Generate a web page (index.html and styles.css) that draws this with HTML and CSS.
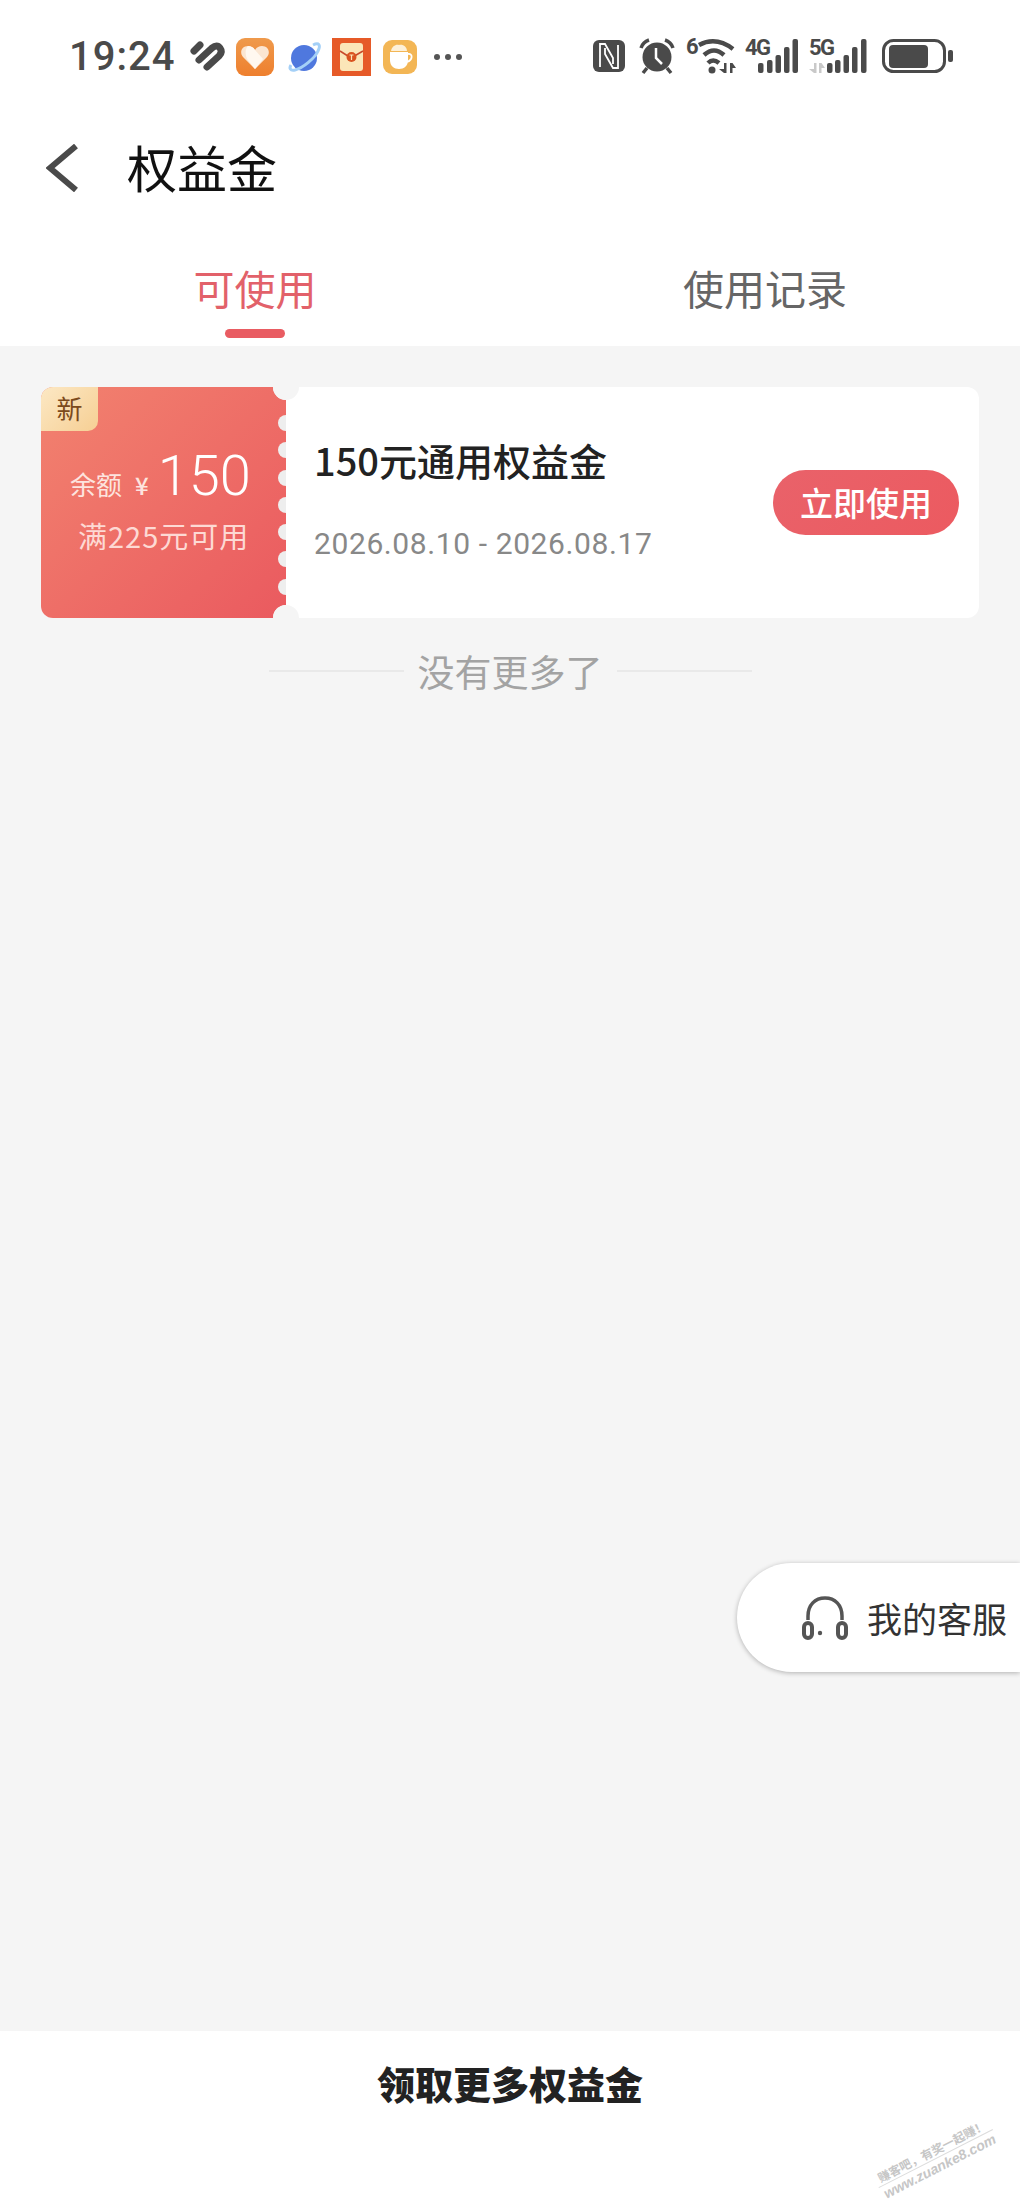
FILE: index.html
```html
<!DOCTYPE html>
<html lang="zh-CN">
<head>
  <meta charset="UTF-8">
  <title>权益金</title>
  <link rel="stylesheet" href="styles.css">
</head>
<body>
  <div class="page">
    <header class="top">
      <div class="status">
        <div class="status-left">
          <span class="time">19:24</span>
          <svg class="ico" width="45" height="40" viewBox="0 0 45 40">
            <g transform="translate(0 5)" fill="none" stroke="#4a4a4a" stroke-width="7" stroke-linecap="round" stroke-linejoin="round">
              <path d="M3 9 L9 3"/>
              <path d="M8 18 L21 6 Q26 2 29 6 Q32 10 28 14 L16 25"/>
            </g>
          </svg>
          <svg class="ico" width="53" height="40" viewBox="0 0 53 40">
            <defs>
              <linearGradient id="gOrange" x1="0" y1="0" x2="0" y2="1"><stop offset="0" stop-color="#ef9a4c"/><stop offset="1" stop-color="#ee7f2e"/></linearGradient>
            </defs>
            <rect x="0" y="1" width="38" height="38" rx="9" fill="url(#gOrange)"/>
            <path d="M19 32 L7 20 C3 15 6 9 12 9 C15 9 17 10 19 13 C21 10 23 9 26 9 C32 9 35 15 31 20 Z" fill="#fbe6d2"/>
            <path d="M12 9 C15 9 17 10 19 13 L27 22 L19 32 L11 22 C9 17 9 12 12 9Z" fill="#fff8f0"/>
          </svg>
          <svg class="ico" width="43" height="40" viewBox="0 0 43 40">
            <circle cx="15" cy="21" r="13" fill="#4f78de"/>
            <path d="M24 8 C30 5 32 8 29 14 C26 21 14 31 6 33 C1 34 0 31 2 28" fill="none" stroke="#a4d0f7" stroke-width="3"/>
          </svg>
          <svg class="ico" width="51" height="40" viewBox="0 0 51 40">
            <rect x="0" y="1" width="39" height="38" fill="#e65a28"/>
            <rect x="8" y="6" width="23" height="28" rx="3" fill="#fbe6b8"/>
            <path d="M8 14 L19 21 L31 14" fill="none" stroke="#c8492a" stroke-width="1.5"/>
            <circle cx="19.500" cy="20" r="5" fill="#d9531f"/>
            <path d="M17.500 18 h4 M19.500 18 v5" stroke="#fbe6b8" stroke-width="1.200"/>
          </svg>
          <svg class="ico" width="51" height="40" viewBox="0 0 51 40">
            <rect x="0" y="3" width="34" height="34" rx="9" fill="#f3b655"/>
            <path d="M7 15 H25 V23 C25 29 21 32 16 32 C11 32 7 29 7 23 Z" fill="#fff"/>
            <path d="M8 14 C9 9 13 7 16 8 C20 7 24 10 24 14 Z" fill="#fdf0d8"/>
            <path d="M25 17 C30 16 30 23 24 25" fill="none" stroke="#fff" stroke-width="1.800"/>
          </svg>
          <span class="more-dots"><i></i><i></i><i></i></span>
        </div>
        <div class="status-right">
          <svg class="ico" width="46" height="40" viewBox="0 0 46 40">
            <rect x="0" y="3" width="32" height="32" rx="6" fill="#4a4a4a"/>
            <path d="M7 30 V7 H12 L20 21 V27 M25 8 V31 H20 L12 17 V11" fill="none" stroke="#fff" stroke-width="1.800"/>
          </svg>
          <svg class="ico" width="47" height="40" viewBox="0 0 47 40">
            <circle cx="18" cy="20" r="14.500" fill="#4a4a4a"/>
            <path d="M17 11 V21 L23 27" fill="none" stroke="#fff" stroke-width="2.500"/>
            <path d="M2 11 Q4 5 10 3 M34 11 Q32 5 26 3 M8 31 L4 36 M28 31 L32 36" fill="none" stroke="#4a4a4a" stroke-width="3.500"/>
          </svg>
          <svg class="ico" width="59" height="40" viewBox="0 0 59 40">
            <text x="0" y="17" class="net">6</text>
            <path d="M13 8 Q30 -1 47 12 M18 18 Q28 9 38 18 M22 26 Q27 21 33 26" fill="none" stroke="#4a4a4a" stroke-width="4.500"/>
            <circle cx="26" cy="33" r="3.500" fill="#4a4a4a"/>
            <path d="M38 26 h2.500 v10 h-2.500 Z M38 36 L33 32 H38 Z M44 26 h2.500 v10 h-2.500 Z M46.500 26 L50 31 H46.500 Z" fill="#4a4a4a"/>
          </svg>
          <svg class="ico" width="64" height="40" viewBox="0 0 64 40">
            <text x="0" y="18" class="net">4G</text>
            <g fill="#4a4a4a">
              <rect x="13" y="26" width="5.500" height="10" rx="2"/>
              <rect x="22" y="23" width="5.500" height="13" rx="2"/>
              <rect x="30.500" y="18" width="5.500" height="18" rx="2"/>
              <rect x="39" y="10" width="5.500" height="26" rx="2"/>
              <rect x="47.500" y="2" width="5.500" height="34" rx="2"/>
            </g>
          </svg>
          <svg class="ico" width="73" height="40" viewBox="0 0 73 40">
            <text x="0" y="18" class="net">5G</text>
            <path d="M5 26 h2.500 v10 h-2.500 Z M5 36 L0 32 H5 Z M10 26 h2.500 v10 h-2.500 Z M12.500 26 L16 31 H12.500 Z" fill="#c9c9c9"/>
            <g fill="#4a4a4a">
              <rect x="18" y="26" width="5.500" height="10" rx="2"/>
              <rect x="26" y="23" width="5.500" height="13" rx="2"/>
              <rect x="34.500" y="18" width="5.500" height="18" rx="2"/>
              <rect x="43" y="10" width="5.500" height="26" rx="2"/>
              <rect x="52" y="2" width="5.500" height="34" rx="2"/>
            </g>
          </svg>
          <svg class="ico" width="71" height="40" viewBox="0 0 71 40">
            <rect x="1.500" y="3.500" width="61" height="31" rx="10" fill="none" stroke="#4a4a4a" stroke-width="3"/>
            <rect x="7" y="8" width="39" height="23" rx="4" fill="#4a4a4a"/>
            <rect x="66" y="13" width="5" height="12" rx="2" fill="#4a4a4a"/>
          </svg>
        </div>
      </div>

      <nav class="nav">
        <svg class="back" width="32" height="48" viewBox="0 0 32 48">
          <path d="M30 2 L4 24 L30 46" fill="none" stroke="#4a4a4a" stroke-width="6"/>
        </svg>
        <h1 class="nav-title">权益金</h1>
      </nav>

      <div class="tabs">
        <div class="tab active">可使用</div>
        <div class="tab">使用记录</div>
      </div>
    </header>

    <main class="content">
      <div class="ticket">
        <div class="ticket-left">
          <span class="badge">新</span>
          <div class="amount">
            <span class="amount-label">余额</span>
            <span class="yen">¥</span>
            <span class="amount-num">150</span>
          </div>
          <div class="limit">满225元可用</div>
        </div>
        <div class="notches">
          <i></i><i></i><i></i><i></i><i></i><i></i><i></i>
        </div>
        <div class="ticket-right">
          <div class="info">
            <div class="ticket-name">150元通用权益金</div>
            <div class="ticket-date">2026.08.10 - 2026.08.17</div>
          </div>
          <div class="use-btn">立即使用</div>
        </div>
      </div>

      <div class="no-more">
        <span class="line"></span>
        <span class="no-more-text">没有更多了</span>
        <span class="line"></span>
      </div>

      <div class="service">
        <svg width="46" height="44" viewBox="0 0 46 44">
          <path d="M6 24 V20 C6 9 13 2 23 2 C33 2 40 9 40 20 V24" fill="none" stroke="#555" stroke-width="3.500"/>
          <rect x="2" y="27" width="8" height="15" rx="4" fill="none" stroke="#555" stroke-width="4"/>
          <rect x="36" y="27" width="8" height="15" rx="4" fill="none" stroke="#555" stroke-width="4"/>
          <circle cx="18" cy="37" r="2.200" fill="#555"/>
        </svg>
        <span class="service-text">我的客服</span>
      </div>
    </main>

    <footer class="bottom">
      <div class="bottom-text">领取更多权益金</div>
      <div class="watermark">
        <div class="wm-cn">赚客吧，有奖一起赚！</div>
        <div class="wm-en">www.zuanke8.com</div>
      </div>
    </footer>
  </div>
</body>
</html>
```

FILE: styles.css
```css
* { box-sizing: border-box; }
html, body { margin: 0; padding: 0; }
body { font-family: "Noto Sans CJK SC", "Noto Sans", sans-serif; background: #f5f5f5; color: #222; }
.page { width: 1020px; height: 2210px; display: flex; flex-direction: column; overflow: hidden; }

.top { background: #fff; }
.status {
  height: 114px;
  display: flex;
  align-items: center;
  justify-content: space-between;
  padding: 0 67px 0 69px;
}
.status-left, .status-right { display: flex; align-items: center; }
.ico { display: block; flex: none; overflow: visible; }
.time {
  font-family: Roboto, sans-serif;
  font-size: 40px;
  font-weight: 500;
  letter-spacing: 1px;
  color: #4a4a4a;
  margin-right: 16px;
  line-height: 40px;
}
.more-dots { display: flex; gap: 5px; }
.more-dots i { width: 6px; height: 6px; border-radius: 50%; background: #555; }
.net { font-family: Roboto, sans-serif; font-size: 22px; font-weight: 700; fill: #4a4a4a; letter-spacing: -1.5px; }

.nav { height: 104px; display: flex; align-items: center; padding-left: 46px; }
.back { display: block; margin: 4px 49px 0 0; }
.nav-title { margin: 0; font-size: 50px; font-weight: 400; color: #111; line-height: 1; }

.tabs { height: 128px; display: flex; }
.tab {
  position: relative;
  flex: 1;
  text-align: center;
  font-size: 41px;
  line-height: 138px;
  color: #666;
}
.tab.active { color: #e2616a; }
.tab.active::after {
  content: "";
  position: absolute;
  left: 50%;
  bottom: 8px;
  width: 60px;
  height: 9px;
  margin-left: -30px;
  border-radius: 5px;
  background: #e95c62;
}

.content { flex: 1; position: relative; padding: 41px 41px 0; }

.ticket { position: relative; height: 231px; display: flex; border-radius: 12px; overflow: hidden; }
.ticket-left {
  position: relative;
  width: 245px;
  flex: none;
  padding-top: 60px;
  background: linear-gradient(135deg, #f2826f 0%, #ea5a5f 100%);
  color: #fff;
}
.badge {
  position: absolute;
  left: 0;
  top: 0;
  width: 57px;
  height: 44px;
  border-bottom-right-radius: 10px;
  background: linear-gradient(135deg, #fce8c4, #f6cf94);
  color: #7c4a1c;
  font-size: 26px;
  line-height: 42px;
  text-align: center;
}
.amount { display: flex; align-items: baseline; padding-left: 29px; height: 58px; }
.amount-label { font-size: 26px; color: #fde4df; }
.yen { font-size: 24px; font-weight: 500; color: #fde4df; margin-left: 13px; }
.amount-num { font-family: Roboto, sans-serif; font-size: 56px; font-weight: 300; margin-left: 9px; line-height: 58px; }
.limit { margin-top: 14px; padding-left: 37px; font-size: 29px; letter-spacing: 1px; line-height: 32px; color: #fdd9d4; white-space: nowrap; }

.notches {
  position: absolute;
  left: 237px;
  top: 28px;
  display: flex;
  flex-direction: column;
  gap: 11.3px;
}
.notches i { display: block; width: 16px; height: 16px; border-radius: 50%; background: #eeeeee; }
.ticket-left::before, .ticket-left::after {
  content: "";
  position: absolute;
  left: 232px;
  width: 26px;
  height: 26px;
  border-radius: 50%;
  background: #f5f5f5;
}
.ticket-left::before { top: -13px; }
.ticket-left::after { bottom: -13px; }

.ticket-right {
  flex: 1;
  position: relative;
  background: #fff;
  display: flex;
  align-items: center;
  justify-content: space-between;
  padding: 0 20px 0 28px;
}
.ticket-right::before, .ticket-right::after {
  content: "";
  position: absolute;
  left: -13px;
  width: 26px;
  height: 26px;
  border-radius: 50%;
  background: #f5f5f5;
}
.ticket-right::before { top: -13px; }
.ticket-right::after { bottom: -13px; }
.info { margin-top: -7px; }
.ticket-name { font-size: 38px; font-weight: 500; line-height: 48px; color: #222; }
.ticket-date { margin-top: 42px; font-family: Roboto, sans-serif; font-size: 30px; line-height: 36px; color: #888; letter-spacing: 0.6px; }
.use-btn {
  width: 186px;
  height: 65px;
  border-radius: 33px;
  background: linear-gradient(135deg, #e9626a, #ec5a60);
  color: #fff;
  font-size: 33px;
  font-weight: 500;
  line-height: 64px;
  text-align: center;
}

.no-more { display: flex; align-items: center; justify-content: center; gap: 14px; margin-top: 27px; }
.line { width: 135px; height: 2px; background: #e9e9e9; }
.no-more-text { font-size: 37px; line-height: 52px; color: #a3a3a3; }

.service {
  position: absolute;
  right: 0;
  top: 1217px;
  width: 283px;
  height: 109px;
  display: flex;
  align-items: center;
  gap: 19px;
  padding-left: 65px;
  background: #fff;
  border-radius: 55px 0 0 55px;
  box-shadow: 0 1px 5px rgba(0, 0, 0, 0.28);
}
.service svg { display: block; flex: none; }
.service-text { font-size: 35px; color: #333; white-space: nowrap; }

.bottom { position: relative; height: 179px; background: #fff; }
.bottom-text { padding-top: 26px; text-align: center; font-size: 38px; font-weight: 900; line-height: 52px; color: #222; }
.watermark {
  position: absolute;
  left: 872px;
  top: 111px;
  width: 128px;
  transform: rotate(-27deg);
  text-align: center;
  color: #c6c6c6;
}
.wm-cn { font-size: 12px; line-height: 16px; font-weight: 700; border-bottom: 1px solid #dcdcdc; white-space: nowrap; }
.wm-en { font-family: "Liberation Sans", sans-serif; font-size: 14px; line-height: 17px; font-weight: 700; font-style: italic; white-space: nowrap; }
```
